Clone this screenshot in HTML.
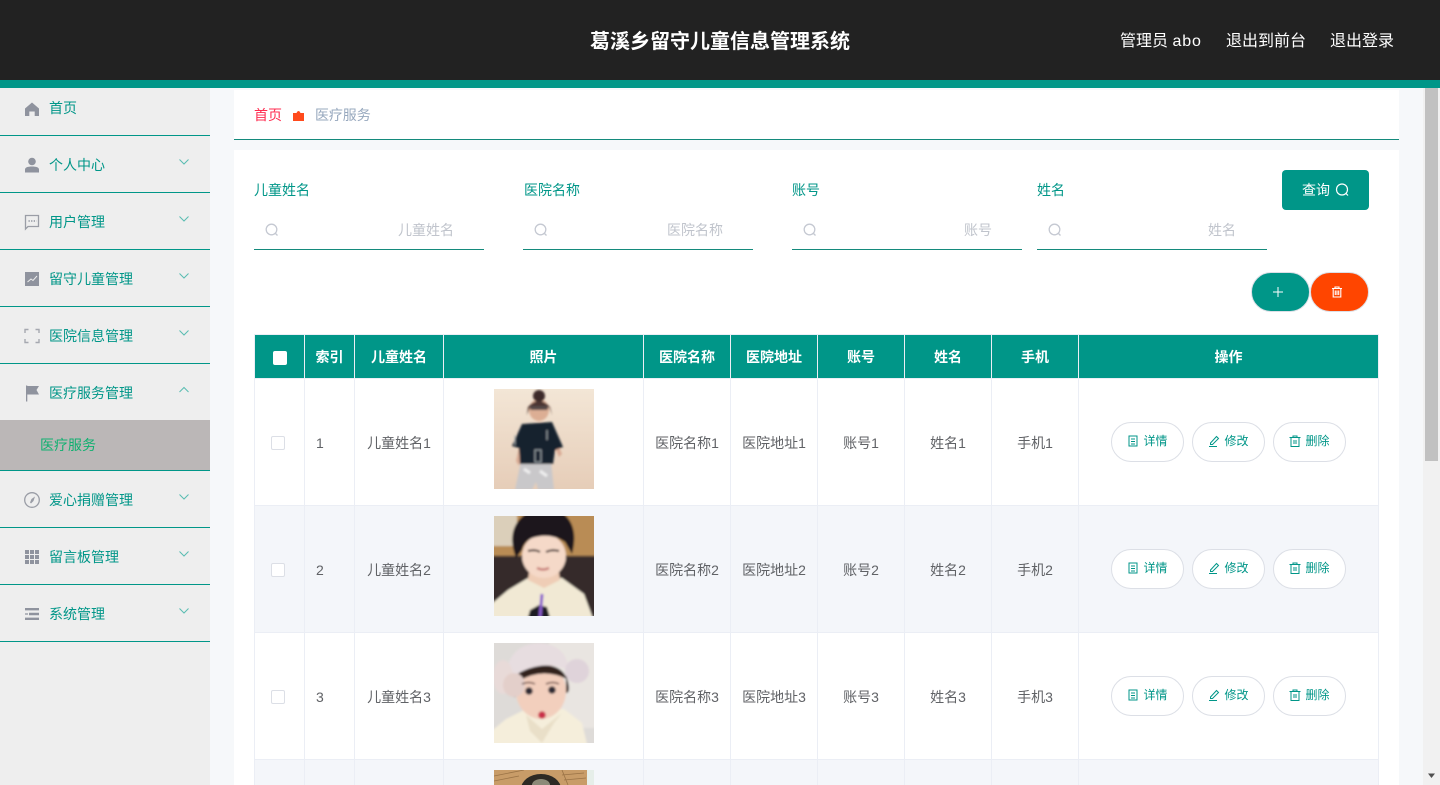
<!DOCTYPE html>
<html lang="zh-CN">
<head>
<meta charset="utf-8">
<title>医疗服务</title>
<style>
*{box-sizing:border-box}
html,body{margin:0;padding:0;width:1440px;height:785px;overflow:hidden;background:#f6f8fa;font-family:"Liberation Sans","Noto Sans CJK SC",sans-serif;font-size:14px}
.a{position:absolute;white-space:nowrap}
#head{left:0;top:0;width:1440px;height:88px;background:#222;border-bottom:8px solid #009688}
#side{left:0;top:88px;width:210px;height:697px;background:#eee}
.line{position:absolute;left:0;width:210px;height:1px;background:#009688}
.mt{position:absolute;left:49px;height:20px;line-height:20px;color:#009688;font-size:14px;white-space:nowrap}
.ic{position:absolute;left:23px;width:18px;height:18px;overflow:visible}
.ar{position:absolute;left:178px;width:12px;height:8px}
.lbl{position:absolute;top:180px;line-height:20px;color:#009688;font-size:14px}
.inp{position:absolute;top:210px;width:230px;height:40px;border-bottom:1px solid #148a7c}
.inp span{position:absolute;right:30px;top:10px;line-height:20px;color:#c0c4cc;font-size:14px}
.inp svg{position:absolute;left:10px;top:12px;width:16px;height:16px}
table{position:absolute;left:254px;top:334px;border-collapse:collapse;table-layout:fixed;width:1125px;background:#fff}
th{height:44px;background:#009688;color:#fff;font-weight:700;font-size:14px;border:1px solid #ebeef5;padding:0;text-align:center}
td{height:127px;border:1px solid #ebeef5;color:#606266;font-size:14px;text-align:center;padding:2px 0 0;vertical-align:middle;white-space:nowrap}
tr.alt td{background:#f4f6fa}
.ck{display:inline-block;width:14px;height:14px;border:1px solid #dcdfe6;border-radius:2px;background:#fff;vertical-align:middle;position:relative;left:-2px;top:-1px}
.ph{display:block;width:100px;height:100px;margin:-4px auto 0;position:relative;top:-2px}
.btn{display:inline-block;width:73px;height:40px;border:1px solid #dcdfe6;border-radius:20px;background:#fff;color:#009688;font-size:12px;line-height:37px;margin:0 4px;vertical-align:middle;position:relative;top:-1px}
.btn svg{width:12px;height:12px;vertical-align:-2px;margin-right:4px}
</style>
</head>
<body>
<div class="a" id="head"></div>
<div class="a" style="left:590px;top:27px;line-height:30px;font-size:20px;font-weight:700;color:#fff">葛溪乡留守儿童信息管理系统</div>
<div class="a" style="left:1120px;top:30px;line-height:24px;font-size:16px;color:#fff">管理员 <span style="letter-spacing:.9px">abo</span></div>
<div class="a" style="left:1226px;top:30px;line-height:24px;font-size:16px;color:#fff">退出到前台</div>
<div class="a" style="left:1330px;top:30px;line-height:24px;font-size:16px;color:#fff">退出登录</div>

<div class="a" id="side">
  <svg class="ic" style="top:12px" viewBox="0 0 18 18"><path fill="#8f939e" d="M9 2.500 16 8.500V16h-4.300v-4.500H6.300V16H2V8.500z"/></svg>
  <div class="mt" style="top:10px">首页</div>
  <div class="line" style="top:47px"></div>

  <svg class="ic" style="top:68px" viewBox="0 0 18 18"><circle cx="9" cy="5.500" r="3.800" fill="#8f939e"/><path fill="#8f939e" d="M2 16.500v-3c0-2 2.500-3 7-3s7 1 7 3v3z"/></svg>
  <div class="mt" style="top:67px">个人中心</div>
  <svg class="ar" style="top:70px" viewBox="0 0 12 8"><path d="M1.500 1.500 6 6l4.500-4.500" fill="none" stroke="#58bcb1" stroke-width="1"/></svg>
  <div class="line" style="top:104px"></div>

  <svg class="ic" style="top:125px" viewBox="0 0 18 18"><path fill="none" stroke="#9a9da6" stroke-width="1.300" d="M2.500 2.500h13v11H5L2.500 16z"/><path stroke="#8f939e" stroke-width="1.400" stroke-dasharray="1.300 1.300" d="M5.500 8h8"/></svg>
  <div class="mt" style="top:124px">用户管理</div>
  <svg class="ar" style="top:127px" viewBox="0 0 12 8"><path d="M1.500 1.500 6 6l4.500-4.500" fill="none" stroke="#58bcb1" stroke-width="1"/></svg>
  <div class="line" style="top:161px"></div>

  <svg class="ic" style="top:182px" viewBox="0 0 18 18"><rect x="2" y="2" width="14" height="14" fill="#8f939e"/><path d="M4.500 12 8 9l2 1.500L14 6" fill="none" stroke="#eee" stroke-width="1"/></svg>
  <div class="mt" style="top:181px">留守儿童管理</div>
  <svg class="ar" style="top:184px" viewBox="0 0 12 8"><path d="M1.500 1.500 6 6l4.500-4.500" fill="none" stroke="#58bcb1" stroke-width="1"/></svg>
  <div class="line" style="top:218px"></div>

  <svg class="ic" style="top:239px" viewBox="0 0 18 18"><path d="M2 6V2.500h3.500M12.500 2.500H16V6M16 12v3.500h-3.500M5.500 15.500H2V12" fill="none" stroke="#a5a8b0" stroke-width="1.400"/></svg>
  <div class="mt" style="top:238px">医院信息管理</div>
  <svg class="ar" style="top:241px" viewBox="0 0 12 8"><path d="M1.500 1.500 6 6l4.500-4.500" fill="none" stroke="#58bcb1" stroke-width="1"/></svg>
  <div class="line" style="top:275px"></div>

  <svg class="ic" style="top:296px" viewBox="0 0 18 18"><path fill="#8f939e" d="M3 1.500h1.300v16H3zM4.300 2H16l-2.500 4 2.500 4.500H4.300z"/></svg>
  <div class="mt" style="top:295px">医疗服务管理</div>
  <svg class="ar" style="top:298px" viewBox="0 0 12 8"><path d="M1.500 6 6 1.500 10.500 6" fill="none" stroke="#58bcb1" stroke-width="1"/></svg>
  <div class="a" style="left:0;top:332px;width:210px;height:50px;background:#bbb7b7"></div>
  <div class="mt" style="left:40px;top:347px;color:#10b070">医疗服务</div>
  <div class="line" style="top:382px"></div>

  <svg class="ic" style="top:403px" viewBox="0 0 18 18"><circle cx="9" cy="9" r="7.300" fill="none" stroke="#9a9da6" stroke-width="1.300"/><path fill="#9a9da6" d="M12 5.500 10.500 10 8 12.500 7 11.500 8.500 8z"/></svg>
  <div class="mt" style="top:402px">爱心捐赠管理</div>
  <svg class="ar" style="top:405px" viewBox="0 0 12 8"><path d="M1.500 1.500 6 6l4.500-4.500" fill="none" stroke="#58bcb1" stroke-width="1"/></svg>
  <div class="line" style="top:439px"></div>

  <svg class="ic" style="top:460px" viewBox="0 0 18 18"><path fill="#8f939e" d="M2 2h4v4H2zM7 2h4v4H7zM12 2h4v4h-4zM2 7h4v4H2zM7 7h4v4H7zM12 7h4v4h-4zM2 12h4v4H2zM7 12h4v4H7zM12 12h4v4h-4z"/></svg>
  <div class="mt" style="top:459px">留言板管理</div>
  <svg class="ar" style="top:462px" viewBox="0 0 12 8"><path d="M1.500 1.500 6 6l4.500-4.500" fill="none" stroke="#58bcb1" stroke-width="1"/></svg>
  <div class="line" style="top:496px"></div>

  <svg class="ic" style="top:517px" viewBox="0 0 18 18"><path fill="#8f939e" d="M2 3h14v2.400H2zM6 7.800h10v2.400H6zM2 8.400h3v1.200H2zM2 12.600h14v2.400H2z"/></svg>
  <div class="mt" style="top:516px">系统管理</div>
  <svg class="ar" style="top:519px" viewBox="0 0 12 8"><path d="M1.500 1.500 6 6l4.500-4.500" fill="none" stroke="#58bcb1" stroke-width="1"/></svg>
  <div class="line" style="top:553px"></div>
</div>

<!-- breadcrumb -->
<div class="a" style="left:234px;top:90px;width:1165px;height:50px;background:#fff;border-bottom:1px solid #148a7c"></div>
<div class="a" style="left:254px;top:105px;line-height:20px;color:#ff2b4f">首页</div>
<svg class="a" style="left:292px;top:109px;width:13px;height:13px" viewBox="0 0 13 13"><path fill="#ff4a1c" d="M1 4h3.500l.7-1.300a1.500 1.500 0 0 1 2.600 0L8.500 4H12v8H1z"/></svg>
<div class="a" style="left:315px;top:105px;line-height:20px;color:#97a8be;letter-spacing:-.1px">医疗服务</div>

<!-- card -->
<div class="a" style="left:234px;top:150px;width:1165px;height:635px;background:#fff"></div>
<div class="lbl" style="left:254px">儿童姓名</div>
<div class="lbl" style="left:524px">医院名称</div>
<div class="lbl" style="left:792px">账号</div>
<div class="lbl" style="left:1037px">姓名</div>
<div class="inp" style="left:254px"><svg viewBox="0 0 16 16"><circle cx="7.500" cy="7.500" r="5.300" fill="none" stroke="#c5c9d2" stroke-width="1.300"/><path d="m11.500 11.500 2 2" stroke="#c5c9d2" stroke-width="1.300"/></svg><span>儿童姓名</span></div>
<div class="inp" style="left:523px"><svg viewBox="0 0 16 16"><circle cx="7.500" cy="7.500" r="5.300" fill="none" stroke="#c5c9d2" stroke-width="1.300"/><path d="m11.500 11.500 2 2" stroke="#c5c9d2" stroke-width="1.300"/></svg><span>医院名称</span></div>
<div class="inp" style="left:792px"><svg viewBox="0 0 16 16"><circle cx="7.500" cy="7.500" r="5.300" fill="none" stroke="#c5c9d2" stroke-width="1.300"/><path d="m11.500 11.500 2 2" stroke="#c5c9d2" stroke-width="1.300"/></svg><span>账号</span></div>
<div class="inp" style="left:1037px"><svg viewBox="0 0 16 16"><circle cx="7.500" cy="7.500" r="5.300" fill="none" stroke="#c5c9d2" stroke-width="1.300"/><path d="m11.500 11.500 2 2" stroke="#c5c9d2" stroke-width="1.300"/></svg><span style="right:31px">姓名</span></div>

<div class="a" style="left:1282px;top:170px;width:87px;height:40px;background:#009688;border-radius:4px"></div>
<div class="a" style="left:1302px;top:180px;line-height:20px;color:#fff">查询</div>
<svg class="a" style="left:1334px;top:182px;width:16px;height:16px" viewBox="0 0 16 16"><circle cx="8" cy="7.500" r="5.500" fill="none" stroke="#fff" stroke-width="1.200"/><path d="m12 11.500 2 2" stroke="#fff" stroke-width="1.200"/></svg>

<div class="a" style="left:1251px;top:272px;width:59px;height:40px;background:#009688;border:1px solid #dcdfe6;border-radius:20px"></div>
<svg class="a" style="left:1272px;top:286px;width:12px;height:12px" viewBox="0 0 12 12"><path d="M6 1v10M1 6h10" stroke="#fff" stroke-width="1"/></svg>
<div class="a" style="left:1310px;top:272px;width:59px;height:40px;background:#ff4500;border:1px solid #dcdfe6;border-radius:20px"></div>
<svg class="a" style="left:1331px;top:286px;width:12px;height:12px" viewBox="0 0 12 12"><path d="M1 2.500h10M4 2.500V1h4v1.500M2.200 2.500V11h7.600V2.500M6 4.500v4.500M4.300 4.500v4.500M7.700 4.500v4.500" fill="none" stroke="#fff" stroke-width="1.100"/></svg>

<table>
<colgroup><col style="width:50px"><col style="width:50px"><col style="width:89px"><col style="width:200px"><col style="width:87px"><col style="width:87px"><col style="width:87px"><col style="width:87px"><col style="width:87px"><col style="width:300px"></colgroup>
<tr>
<th><span style="display:inline-block;width:14px;height:14px;background:#fff;border-radius:2px;vertical-align:middle"></span></th>
<th>索引</th><th>儿童姓名</th><th>照片</th><th>医院名称</th><th>医院地址</th><th>账号</th><th>姓名</th><th>手机</th><th>操作</th>
</tr>
<tr>
<td><span class="ck"></span></td>
<td style="text-align:left;padding-left:11px">1</td><td>儿童姓名1</td>
<td><svg class="ph" viewBox="0 0 100 100"><defs><filter id="b1" x="-20%" y="-20%" width="140%" height="140%"><feGaussianBlur stdDeviation="1"/></filter><linearGradient id="g1" x1="0" y1="0" x2="0" y2="1"><stop offset="0" stop-color="#f3e6d6"/><stop offset="1" stop-color="#e6cdb8"/></linearGradient></defs><rect width="100" height="100" fill="url(#g1)"/><g filter="url(#b1)"><path d="M28 45 22 72l3 5 5-24zM60 45l8 20-3 3-7-16z" fill="#d9ab94"/><path d="M27 72h30l3 29H44l-2-8-4 8H21z" fill="#c9c8ca"/><path d="M30 80l6 4M46 82l7 5" stroke="#efefef" stroke-width="3"/><ellipse cx="45" cy="21" rx="10" ry="11" fill="#dcae94"/><circle cx="45" cy="7" r="6" fill="#3e2c2c"/><path d="M34 18q11-12 22 0l2 8-3-8H36l-3 8z" fill="#4c3430"/><rect x="36" y="17" width="18" height="4" rx="2" fill="#55494a"/><path d="M28 35l30-2 11 25-8 3-2 14H26l-1-16-7-2z" fill="#15212f"/><path d="M41 61h6v12h-6zM21 46v10M53 41v10" fill="none" stroke="#9aa3a8" stroke-width="1"/></g></svg></td>
<td>医院名称1</td><td>医院地址1</td><td>账号1</td><td>姓名1</td><td>手机1</td>
<td><span class="btn"><svg viewBox="0 0 12 12"><path d="M2 1h8v10H2zM4 4h4M4 6.500h4M4 9h4" fill="none" stroke="#009688"/></svg>详情</span><span class="btn"><svg viewBox="0 0 12 12"><path d="M2.500 8 8.500 1.500l2 2-6 6H2.500zM1 11.500h8" fill="none" stroke="#009688"/></svg>修改</span><span class="btn"><svg viewBox="0 0 12 12"><path d="M.5 2.500h11M4 2.500V1h4v1.500M2 2.500v9h8v-9M5 5v4M7 5v4" fill="none" stroke="#009688"/></svg>删除</span></td>
</tr>
<tr class="alt">
<td><span class="ck"></span></td>
<td style="text-align:left;padding-left:11px">2</td><td>儿童姓名2</td>
<td><svg class="ph" viewBox="0 0 100 100"><defs><filter id="b2" x="-20%" y="-20%" width="140%" height="140%"><feGaussianBlur stdDeviation="1"/></filter></defs><rect width="100" height="100" fill="#332a2c"/><g filter="url(#b2)"><rect x="-10" y="-10" width="120" height="50" fill="#b98c55"/><rect x="-10" y="-10" width="33" height="40" fill="#dbcfba"/><rect x="-10" y="41" width="120" height="70" fill="#342a2c"/><path d="M-5 105V90L14 74 34 62H68L90 78 100 105z" fill="#f1e9d4"/><path d="M34 64 36 50H64L66 64 50 72z" fill="#efcdb6"/><ellipse cx="50" cy="40" rx="22" ry="22" fill="#f5d9c8"/><path d="M22 42Q10 10 36-5H66Q86 8 78 38L71 26Q56 16 38 22 30 26 28 34z" fill="#1e171b"/><path d="M34 35q7-2 12 1M52 36q6-3 13-1" stroke="#3a2b2a" stroke-width="2" fill="none"/><path d="M43 52q6 3 12 0" stroke="#c9807a" stroke-width="2.500" fill="none"/><path d="M33 105l3-11 9-5 8 2 4 14z" fill="#1c1a20"/><path d="M48 78 46 102" stroke="#8a5dcb" stroke-width="3"/></g></svg></td>
<td>医院名称2</td><td>医院地址2</td><td>账号2</td><td>姓名2</td><td>手机2</td>
<td><span class="btn"><svg viewBox="0 0 12 12"><path d="M2 1h8v10H2zM4 4h4M4 6.500h4M4 9h4" fill="none" stroke="#009688"/></svg>详情</span><span class="btn"><svg viewBox="0 0 12 12"><path d="M2.500 8 8.500 1.500l2 2-6 6H2.500zM1 11.500h8" fill="none" stroke="#009688"/></svg>修改</span><span class="btn"><svg viewBox="0 0 12 12"><path d="M.5 2.500h11M4 2.500V1h4v1.500M2 2.500v9h8v-9M5 5v4M7 5v4" fill="none" stroke="#009688"/></svg>删除</span></td>
</tr>
<tr>
<td><span class="ck"></span></td>
<td style="text-align:left;padding-left:11px">3</td><td>儿童姓名3</td>
<td><svg class="ph" viewBox="0 0 100 100"><defs><filter id="b3" x="-20%" y="-20%" width="140%" height="140%"><feGaussianBlur stdDeviation="1"/></filter></defs><rect width="100" height="100" fill="#dedbd8"/><g filter="url(#b3)"><rect x="55" y="-5" width="50" height="90" fill="#e9e5e1"/><path d="M-5 105V90L12 76 32 66 70 66 88 80 94 105z" fill="#f5eedb"/><path d="M32 72 48 86 68 70 60 80 48 100 36 88z" fill="#e9dfc8"/><path d="M19 40Q18 62 24 50L23 34zM72 32Q78 50 72 50z" fill="#33221f"/><ellipse cx="47" cy="48" rx="25" ry="28" fill="#f2cfbd"/><path d="M22 36Q24 24 48 22 68 22 73 36 48 24 25 38z" fill="#33221f"/><path d="M13 26Q18 1 46 0 70 2 74 22L72 26Q46 16 18 34z" fill="#e7dde0"/><circle cx="83" cy="28" r="12" fill="#dfd3da"/><ellipse cx="9" cy="34" rx="10" ry="17" fill="#e8dad8"/><ellipse cx="20" cy="42" rx="11" ry="12" fill="#e3cfca"/><circle cx="35" cy="48" r="3.800" fill="#2e2a35"/><circle cx="58" cy="47" r="3.800" fill="#2e2a35"/><path d="M28 41q7-3 13 0M52 41q7-3 13 0" stroke="#6a4b45" stroke-width="1.500" fill="none"/><ellipse cx="48" cy="72" rx="3.800" ry="3.800" fill="#c92f49"/></g></svg></td>
<td>医院名称3</td><td>医院地址3</td><td>账号3</td><td>姓名3</td><td>手机3</td>
<td><span class="btn"><svg viewBox="0 0 12 12"><path d="M2 1h8v10H2zM4 4h4M4 6.500h4M4 9h4" fill="none" stroke="#009688"/></svg>详情</span><span class="btn"><svg viewBox="0 0 12 12"><path d="M2.500 8 8.500 1.500l2 2-6 6H2.500zM1 11.500h8" fill="none" stroke="#009688"/></svg>修改</span><span class="btn"><svg viewBox="0 0 12 12"><path d="M.5 2.500h11M4 2.500V1h4v1.500M2 2.500v9h8v-9M5 5v4M7 5v4" fill="none" stroke="#009688"/></svg>删除</span></td>
</tr>
</table>
<div class="a" style="left:254px;top:760px;width:1125px;height:25px;background:#f4f6fa"></div>
<div class="a" style="left:254px;top:760px;width:1125px;height:25px;border-left:1px solid #ebeef5;border-right:1px solid #ebeef5"></div>
<div class="a" style="left:304px;top:760px;width:1px;height:25px;background:#ebeef5"></div>
<div class="a" style="left:354px;top:760px;width:1px;height:25px;background:#ebeef5"></div>
<div class="a" style="left:443px;top:760px;width:1px;height:25px;background:#ebeef5"></div>
<div class="a" style="left:643px;top:760px;width:1px;height:25px;background:#ebeef5"></div>
<div class="a" style="left:730px;top:760px;width:1px;height:25px;background:#ebeef5"></div>
<div class="a" style="left:817px;top:760px;width:1px;height:25px;background:#ebeef5"></div>
<div class="a" style="left:904px;top:760px;width:1px;height:25px;background:#ebeef5"></div>
<div class="a" style="left:991px;top:760px;width:1px;height:25px;background:#ebeef5"></div>
<div class="a" style="left:1078px;top:760px;width:1px;height:25px;background:#ebeef5"></div>
<svg class="a" style="left:494px;top:770px;width:100px;height:15px" viewBox="0 0 100 15"><rect width="100" height="15" fill="#c89c68"/><path d="M93 0h7v15h-7z" fill="#e6eee9"/><path d="M0 6 30 0M0 11 25 6M68 5 90 3M70 10 92 8M68 0 74 15" stroke="#9a7346" stroke-width=".8"/><ellipse cx="47" cy="19" rx="20" ry="15" fill="#2d2a24"/><ellipse cx="47" cy="15" rx="9" ry="6" fill="#8c8a78"/></svg>

<!-- scrollbar -->
<div class="a" style="left:1423px;top:88px;width:17px;height:697px;background:#f1f1f1"></div>
<div class="a" style="left:1425px;top:88px;width:13px;height:373px;background:#c1c1c1"></div>
<svg class="a" style="left:1427px;top:771px;width:9px;height:9px" viewBox="0 0 9 9"><path d="M1 2.500h7L4.500 7z" fill="#505050"/></svg>
</body>
</html>
